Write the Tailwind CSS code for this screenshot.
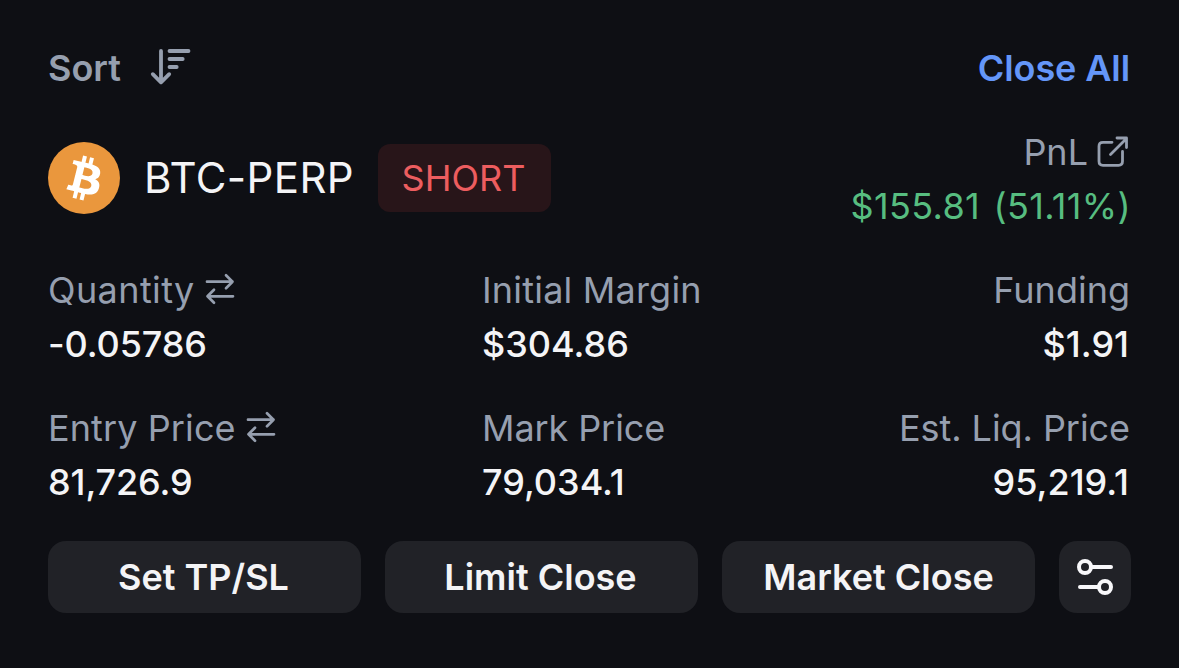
<!DOCTYPE html>
<html lang="en">
<head>
    <meta charset="UTF-8">
    <meta name="viewport" content="width=device-width, initial-scale=1.0">
    <title>Positions</title>
    <!-- Tailwind CSS CDN -->
    <script src="https://cdn.jsdelivr.net/npm/@tailwindcss/browser@4"></script>
    <style>
        body { font-family: 'Inter', sans-serif; }
    </style>
</head>
<body class="bg-[#0e0f14] text-[#f4f4f6] overflow-hidden">

    <main class="h-[668px] px-12 pt-[41px] text-[36px] leading-[54px] whitespace-nowrap">

        <!-- Toolbar -->
        <header class="flex items-center justify-between font-semibold">
            <button class="flex items-center gap-[29px] text-[#969faf]">
                Sort
                <svg class="w-10 h-10 -mt-0.5 overflow-visible" viewBox="0 0 40 40" fill="none" stroke="currentColor" stroke-width="3.8" stroke-linecap="round" stroke-linejoin="round">
                    <path d="M11 4v31M2.8 27.2l8.2 8.1 8.2-8.1M19.5 4H38.500M19.5 12h13.2M19.5 20h7.2" />
                </svg>
            </button>
            <button class="pr-px text-[#6496f8] tracking-[-0.1px]">Close All</button>
        </header>

        <!-- Market and PnL -->
        <section class="mt-[30px] flex items-start justify-between">
            <div class="mt-[17px] flex items-center">
                <svg class="w-[72px] h-[72px]" viewBox="0 0 32 32">
                    <circle cx="16" cy="16" r="16" fill="#ea973d" />
                    <path fill="#fff" d="M23.189 14.02c.314-2.096-1.283-3.223-3.465-3.975l.708-2.84-1.728-.43-.69 2.765c-.454-.114-.92-.22-1.385-.326l.695-2.783L15.596 6l-.708 2.839c-.376-.086-.746-.17-1.104-.26l.002-.009-2.384-.595-.46 1.846s1.283.294 1.256.312c.7.175.826.638.805 1.006l-.806 3.235c.048.012.11.03.18.057l-.183-.045-1.13 4.532c-.086.212-.303.531-.793.41.018.025-1.256-.313-1.256-.313l-.858 1.978 2.25.561c.418.105.828.215 1.231.318l-.715 2.872 1.727.43.708-2.84c.472.127.93.245 1.378.357l-.706 2.828 1.728.43.715-2.866c2.948.558 5.164.333 6.097-2.333.752-2.146-.037-3.385-1.588-4.192 1.13-.26 1.98-1.003 2.207-2.538zm-3.95 5.538c-.533 2.147-4.148.986-5.32.695l.95-3.805c1.172.293 4.929.872 4.37 3.11zm.535-5.569c-.487 1.953-3.495.96-4.47.717l.86-3.45c.975.243 4.118.696 3.61 2.733z" />
                </svg>
                <h1 class="ml-6 w-[234px] text-[42px] tracking-[0.4px]">BTC-PERP</h1>
                <span class="flex h-[68px] w-[173px] items-center justify-center rounded-xl bg-[#281519] pr-0.5 text-[#ed5d5f]">SHORT</span>
            </div>
            <div class="text-right">
                <div class="flex items-center justify-end gap-1.5 text-[#969faf]">
                    PnL
                    <svg class="w-9 h-9 mt-0.5 mr-px" viewBox="0 0 36 36" fill="none" stroke="currentColor" stroke-width="2.8" stroke-linecap="round" stroke-linejoin="round">
                        <path d="M18 7.3H9q-4 0-4 4v15q0 4 4 4h15.500q4 0 4-4V16.500M16.500 19.500L32 4M23 3h9.500v9.500" />
                    </svg>
                </div>
                <div class="text-[#57bd80] tracking-[0.35px] [word-spacing:3px]">$155.81 (51.11%)</div>
            </div>
        </section>

        <!-- Position details -->
        <section class="mt-[30px] grid grid-cols-[434px_1fr_1fr] gap-y-[30px]">
            <div>
                <div class="flex items-center gap-[7px] text-[#969faf] tracking-[0.4px]">
                    Quantity
                    <svg class="w-9 h-9" viewBox="0 0 36 36" fill="none" stroke="currentColor" stroke-width="2.7" stroke-linecap="round" stroke-linejoin="round">
                        <path d="M5 9.700h25.500M24 3.200l6.500 6.500-6.500 6.500M31 24.300H5.500M12 17.800l-6.500 6.500 6.500 6.500" />
                    </svg>
                </div>
                <div class="font-medium tracking-[-0.1px]">-0.05786</div>
            </div>
            <div>
                <div class="text-[#969faf] tracking-[0.2px]">Initial Margin</div>
                <div class="font-medium">$304.86</div>
            </div>
            <div class="text-right">
                <div class="pr-px text-[#969faf]">Funding</div>
                <div class="pr-0.5 font-medium">$1.91</div>
            </div>
            <div>
                <div class="flex items-center gap-[7px] text-[#969faf] tracking-[0.1px]">
                    Entry Price
                    <svg class="w-9 h-9" viewBox="0 0 36 36" fill="none" stroke="currentColor" stroke-width="2.7" stroke-linecap="round" stroke-linejoin="round">
                        <path d="M5 9.700h25.500M24 3.200l6.500 6.500-6.500 6.500M31 24.300H5.500M12 17.800l-6.500 6.500 6.500 6.500" />
                    </svg>
                </div>
                <div class="font-medium tracking-[-0.1px]">81,726.9</div>
            </div>
            <div>
                <div class="text-[#969faf] tracking-[-0.1px]">Mark Price</div>
                <div class="font-medium">79,034.1</div>
            </div>
            <div class="text-right">
                <div class="pr-px text-[#969faf] tracking-[-0.06px]">Est. Liq. Price</div>
                <div class="pr-0.5 font-medium">95,219.1</div>
            </div>
        </section>

        <!-- Actions -->
        <footer class="mt-8 flex gap-6 font-semibold">
            <button class="h-[72px] w-[313px] rounded-[18px] bg-[#212227] pr-0.5">Set TP/SL</button>
            <button class="h-[72px] w-[313px] rounded-[18px] bg-[#212227] pr-0.5">Limit Close</button>
            <button class="h-[72px] w-[313px] rounded-[18px] bg-[#212227]">Market Close</button>
            <button class="h-[72px] w-[72px] rounded-[18px] bg-[#212227]">
                <svg class="w-[72px] h-[72px]" viewBox="0 0 72 72" fill="none" stroke="#f8f8fa" stroke-width="4" stroke-linecap="round">
                    <circle cx="26" cy="26" r="6" />
                    <path d="M33 26h19M21 46h18" />
                    <circle cx="46" cy="46" r="6" />
                </svg>
            </button>
        </footer>
    </main>

</body>
</html>
